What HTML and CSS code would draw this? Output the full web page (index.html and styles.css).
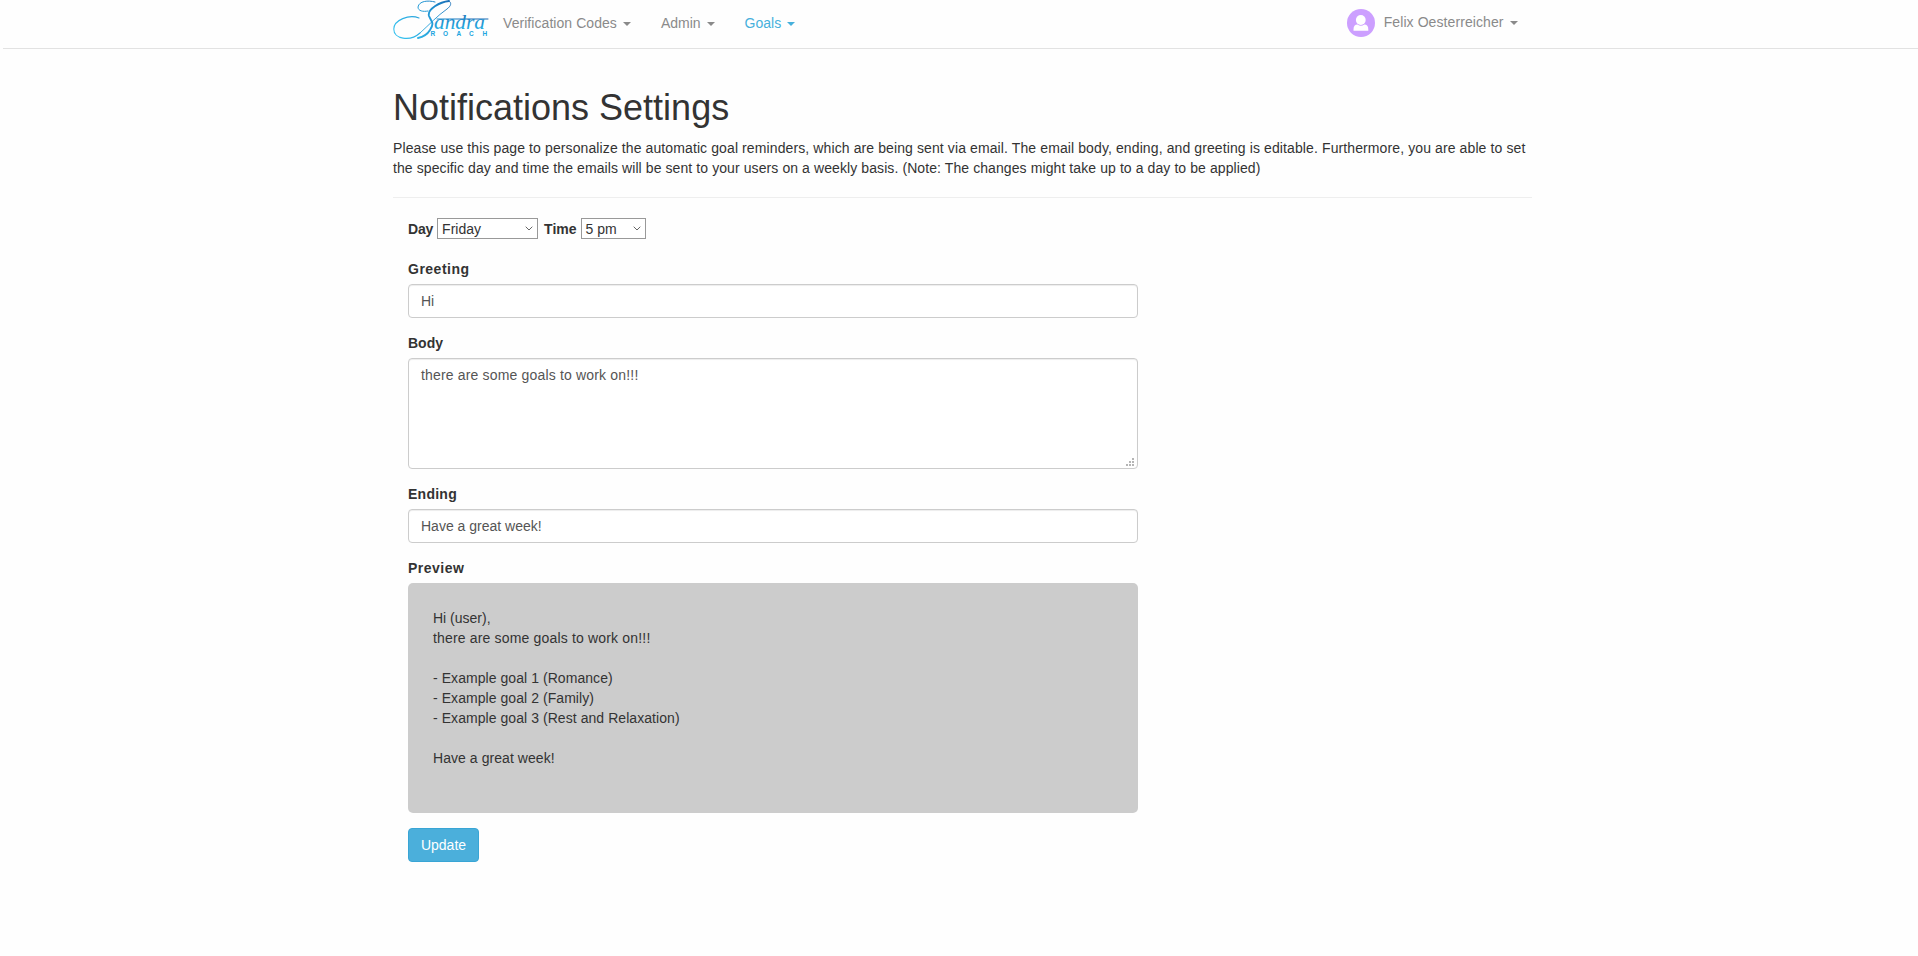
FILE: index.html
```html
<!DOCTYPE html>
<html lang="en">
<head>
<meta charset="utf-8">
<title>Notifications Settings</title>
<link rel="stylesheet" href="styles.css">
</head>
<body>
<header class="navbar">
  <div class="container navbar-inner">
    <a class="brand" aria-label="Sandra Roach">
      <svg class="logo" width="98" height="44" viewBox="0 0 98 44">
        <defs>
          <linearGradient id="ink" gradientUnits="userSpaceOnUse" x1="10" y1="40" x2="60" y2="0">
            <stop offset="0" stop-color="#35c0ee"/>
            <stop offset=".6" stop-color="#2196d4"/>
            <stop offset="1" stop-color="#1768b2"/>
          </linearGradient>
          <linearGradient id="word" x1="0" y1="1" x2="0" y2="0">
            <stop offset="0" stop-color="#2bbbec"/>
            <stop offset="1" stop-color="#1768b2"/>
          </linearGradient>
        </defs>
        <g fill="none" stroke="url(#ink)" stroke-linecap="round">
          <path stroke-width="1" d="M35 11 C30 12 25 11 25 7 C26 1 35 0 42 2"/>
          <path stroke-width="1.100" d="M26 18 C16 14 1 20 0.800 29 C0.500 39 17 42 27 33"/>
          <path stroke-width="1.900" d="M56 1 C47 2 34 9 36 16 C38 21 42 23 37 30 C34 35 30 37 25 38"/>
          <path stroke-width=".9" d="M27 33 C37 24 44 16 54 9 C58 6 59 3 56 1"/>
          <path stroke-width="1" d="M44 19 H95"/>
        </g>
        <text class="logo-name" x="41" y="28.500" textLength="51" lengthAdjust="spacingAndGlyphs" fill="url(#word)">andra</text>
        <text class="logo-sub" y="36" x="37.500 50 63.500 76 89.500" fill="#20a5df">ROACH</text>
      </svg>
    </a>
    <nav class="menu">
      <a class="menu-item menu-codes">Verification Codes<b class="caret"></b></a>
      <a class="menu-item">Admin<b class="caret"></b></a>
      <a class="menu-item active">Goals<b class="caret"></b></a>
    </nav>
    <a class="user">
      <svg class="avatar" width="28" height="28" viewBox="0 0 28 28">
        <circle cx="14" cy="14" r="14" fill="#cc9fff"/>
        <circle cx="13.800" cy="11" r="4.900" fill="#fff"/>
        <path d="M6.500 21.800 V20.500 Q6.500 15.500 10.500 15.500 Q14 18 17.300 15.500 Q21.300 15.500 21.300 20.500 V21.800 Z" fill="#fff"/>
      </svg>
      Felix Oesterreicher<b class="caret"></b>
    </a>
  </div>
</header>
<main class="container">
  <h1 class="title">Notifications Settings</h1>
  <p class="intro"><span class="intro-lead">Please use this page to personalize the automatic goal reminders, which are being sent via email. The email body, ending, and greeting is editable. Furthermore, you are able to set</span><br><span class="intro-note">the specific day and time the emails will be sent to your users on a weekly basis. (Note: The changes might take up to a day to be applied)</span></p>
  <hr class="rule">
  <form class="form">
    <div class="schedule">
      <label class="label label-day">Day</label>
      <div class="select select-day">Friday<svg class="chevron" width="8" height="5" viewBox="0 0 8 5"><path d="M.7.700 4 4 7.300.700"/></svg></div>
      <label class="label">Time</label>
      <div class="select select-time">5 pm<svg class="chevron" width="8" height="5" viewBox="0 0 8 5"><path d="M.7.700 4 4 7.300.700"/></svg></div>
    </div>
    <div class="field"><label class="label wide">Greeting</label><div class="control">Hi</div></div>
    <div class="field"><label class="label">Body</label>
      <div class="control control-area"><span class="message">there are some goals to work on!!!</span>
        <svg class="grip" width="9" height="9" viewBox="0 0 9 9"><path d="M6 0h2v2h-2zM3 3h2v2h-2zM6 3h2v2h-2zM0 6h2v2h-2zM3 6h2v2h-2zM6 6h2v2h-2z"/></svg>
      </div>
    </div>
    <div class="field"><label class="label label-ending">Ending</label><div class="control">Have a great week!</div></div>
    <div class="field"><label class="label wide">Preview</label>
      <div class="preview">Hi (user),<br><span class="message">there are some goals to work on!!!</span><br><br><span class="goals">- Example goal 1 (Romance)<br>- Example goal 2 (Family)<br>- Example goal 3 (Rest and Relaxation)</span><br><br><span class="goals">Have a great week!</span></div>
    </div>
    <button class="update" type="button">Update</button>
  </form>
</main>
</body>
</html>
```
FILE: styles.css
```css
* { box-sizing: border-box; }
body {
  margin: 0;
  background: #fefefe;
  color: #333;
  font: 14px/20px "Liberation Sans", Arial, sans-serif;
}
.container { width: 1140px; margin: 0 auto; padding-left: 4px; }
.navbar { height: 49px; margin-left: 3px; border-bottom: 1px solid #e2e2e2; }
.navbar-inner { display: flex; height: 48px; padding-left: 2.500px; }
.brand { width: 110px; }
.logo { display: block; overflow: visible; }
.logo-name { font: italic 20px/20px "Liberation Serif", serif; }
.logo-sub { font: bold 6.500px "Liberation Sans", sans-serif; }
.menu { display: flex; gap: 30px; padding-top: 13px; }
.menu-item, .user { color: #8a8a8a; white-space: nowrap; }
.menu-codes { letter-spacing: .06px; }
.menu-item.active { color: #46b0dc; }
.caret {
  display: inline-block;
  margin-left: 6px;
  vertical-align: middle;
  border-top: 4px solid currentColor;
  border-left: 4px solid transparent;
  border-right: 4px solid transparent;
}
.user {
  display: flex;
  align-items: center;
  height: 20px;
  margin: 12px 13px 0 auto;
  letter-spacing: .08px;
}
.user .caret { margin-top: 2px; }
.avatar { margin: 1px 9px 0 0; }
.title { margin: 0; padding-top: 39px; font-size: 36px; font-weight: normal; line-height: 40px; }
.intro { margin: 10px 0 0; white-space: nowrap; }
.intro-lead { letter-spacing: .107px; }
.intro-note { letter-spacing: .09px; }
.rule { margin: 19px -3px 20px 0; border: 0; border-top: 1px solid #eee; }
.form { width: 745px; padding-left: 15px; }
.schedule { display: flex; align-items: center; height: 21px; margin-bottom: 20px; }
.label { font-weight: bold; }
.wide { letter-spacing: .5px; }
.label-day { letter-spacing: -.2px; }
.label-ending { letter-spacing: .25px; }
.select {
  display: flex;
  align-items: center;
  justify-content: space-between;
  height: 21px;
  padding: 0 4px;
  border: 1px solid #999;
  background: #fff;
}
.select-day { width: 101px; margin: 0 6px 0 4px; }
.select-time { width: 65px; margin-left: 4px; }
.chevron { fill: none; stroke: #666; stroke-width: 1; }
.field { margin-bottom: 15px; }
.field .label { display: block; margin-bottom: 5px; }
.control {
  height: 34px;
  padding: 6px 12px;
  color: #555;
  background: #fff;
  border: 1px solid #ccc;
  border-radius: 4px;
  box-shadow: inset 0 1px 1px rgba(0, 0, 0, .075);
}
.control-area { position: relative; height: 111px; }
.message { letter-spacing: .17px; }
.goals { letter-spacing: .06px; }
.grip { position: absolute; right: 2px; bottom: 1px; fill: #b5b5b5; }
.preview { height: 230px; padding: 25px; background: #ccc; border-radius: 5px; }
.update {
  display: block;
  width: 71px;
  height: 34px;
  padding: 0;
  color: #fff;
  background: #4bafdb;
  border: 1px solid #39a5d5;
  border-radius: 4px;
  font: inherit;
}
```
